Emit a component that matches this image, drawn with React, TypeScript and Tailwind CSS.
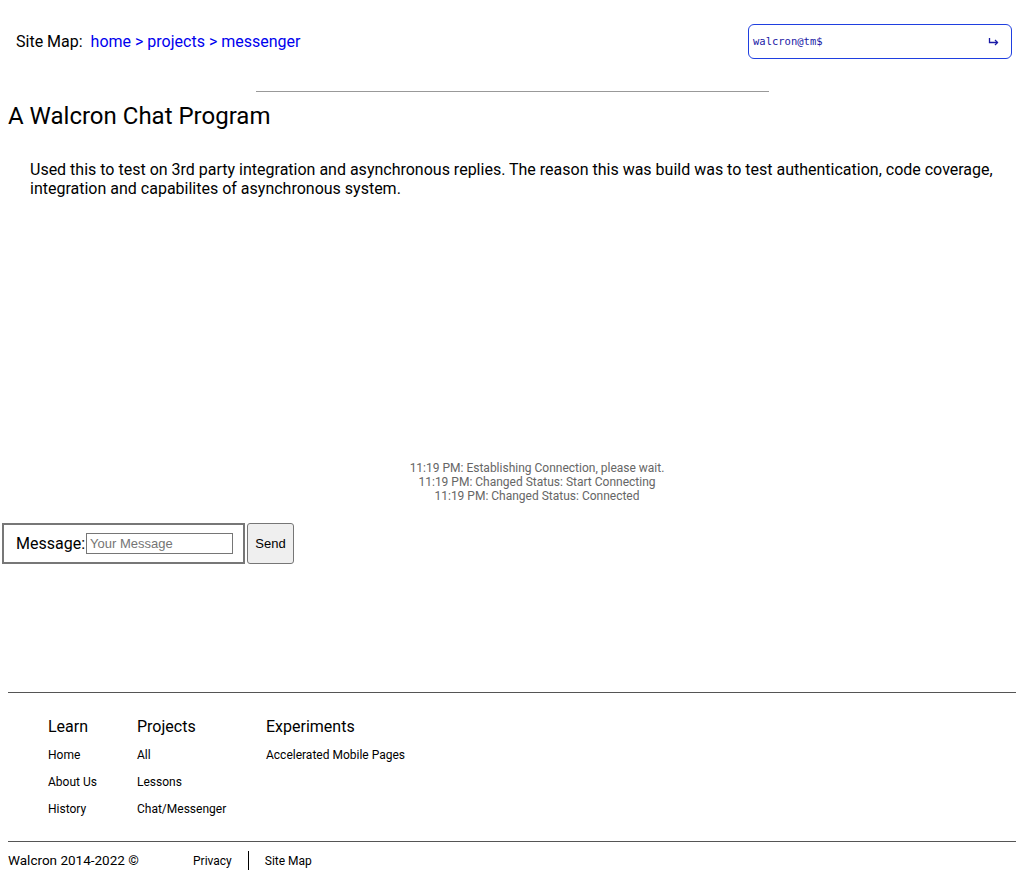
import React from "react";

export default function App() {
  return (
    <div className="min-h-[885px] bg-white text-black" style={{ fontFamily: "Roboto, 'Liberation Sans', sans-serif" }}>
      <header className="flex items-center justify-between pl-4 pr-3 pt-6">
        <div className="flex items-center text-base h-[35px]">
          <span>Site Map:</span>
          <span className="ml-2 text-[#0000ee]">home &gt; projects &gt; messenger</span>
        </div>
        <div className="flex h-[35px] w-[264px] items-center justify-between rounded-md border border-[#1f3fe0] pl-1 pr-3 text-[10.5px] text-[#1a1aa6]" style={{ fontFamily: "'DejaVu Sans Mono', monospace" }}>
          <span>walcron@tm$</span>
          <svg width="11" height="10" viewBox="0 0 11 10" fill="none" stroke="#1a1aa6" strokeWidth="1.3">
            <path d="M1.5 1v4.5h8" />
            <path d="M7 3l2.5 2.5L7 8" />
          </svg>
        </div>
      </header>
      <div className="mt-[32px] flex justify-center">
        <div className="h-px w-[513px] bg-[#999]" />
      </div>
      <h1 className="ml-2 mt-[11px] text-2xl leading-[26px]">A Walcron Chat Program</h1>
      <p className="ml-[30px] mr-4 mt-[31px] text-base leading-[19px]">
        Used this to test on 3rd party integration and asynchronous replies. The reason this was build was to test authentication, code coverage, integration and capabilites of asynchronous system.
      </p>
      <div className="mt-[263px] flex flex-col items-center pl-[50px] text-xs leading-[14px] text-[#666]">
        <div>11:19 PM: Establishing Connection, please wait.</div>
        <div>11:19 PM: Changed Status: Start Connecting</div>
        <div>11:19 PM: Changed Status: Connected</div>
      </div>
      <div className="ml-[2px] mt-[20px] flex items-stretch gap-[2px]">
        <div className="flex h-[41px] w-[243px] items-center border-2 border-[#777] pl-[12px]">
          <span className="text-base">Message:</span>
          <input placeholder="Your Message" className="ml-px h-[21px] w-[147px] border border-[#767676] px-[3px] text-[13px] text-black placeholder:text-[#757575] outline-none" style={{ fontFamily: "'Liberation Sans', Arial, sans-serif" }} />
        </div>
        <button className="h-[41px] w-[47px] rounded-[3px] border border-[#767676] bg-[#efefef] text-[13px]" style={{ fontFamily: "'Liberation Sans', Arial, sans-serif" }}>Send</button>
      </div>
      <footer className="mx-2 mt-[128px]">
        <div className="h-px bg-[#555]" />
        <div className="ml-10 mt-[24px] flex gap-0">
          <div className="w-[89px]">
            <div className="text-base leading-[20px]">Learn</div>
            <ul className="mt-[5px] text-xs leading-[27px]">
              <li>Home</li>
              <li>About Us</li>
              <li>History</li>
            </ul>
          </div>
          <div className="w-[129px]">
            <div className="text-base leading-[20px]">Projects</div>
            <ul className="mt-[5px] text-xs leading-[27px]">
              <li>All</li>
              <li>Lessons</li>
              <li>Chat/Messenger</li>
            </ul>
          </div>
          <div>
            <div className="text-base leading-[20px]">Experiments</div>
            <ul className="mt-[5px] text-xs leading-[27px]">
              <li>Accelerated Mobile Pages</li>
            </ul>
          </div>
        </div>
        <div className="mt-[18px] h-px bg-[#555]" />
        <div className="mt-[9px] flex items-center text-xs">
          <span className="w-[185px] text-[13.5px]">Walcron 2014-2022 ©</span>
          <span>Privacy</span>
          <span className="mx-4 h-[19px] w-px bg-black" />
          <span>Site Map</span>
        </div>
      </footer>
    </div>
  );
}
